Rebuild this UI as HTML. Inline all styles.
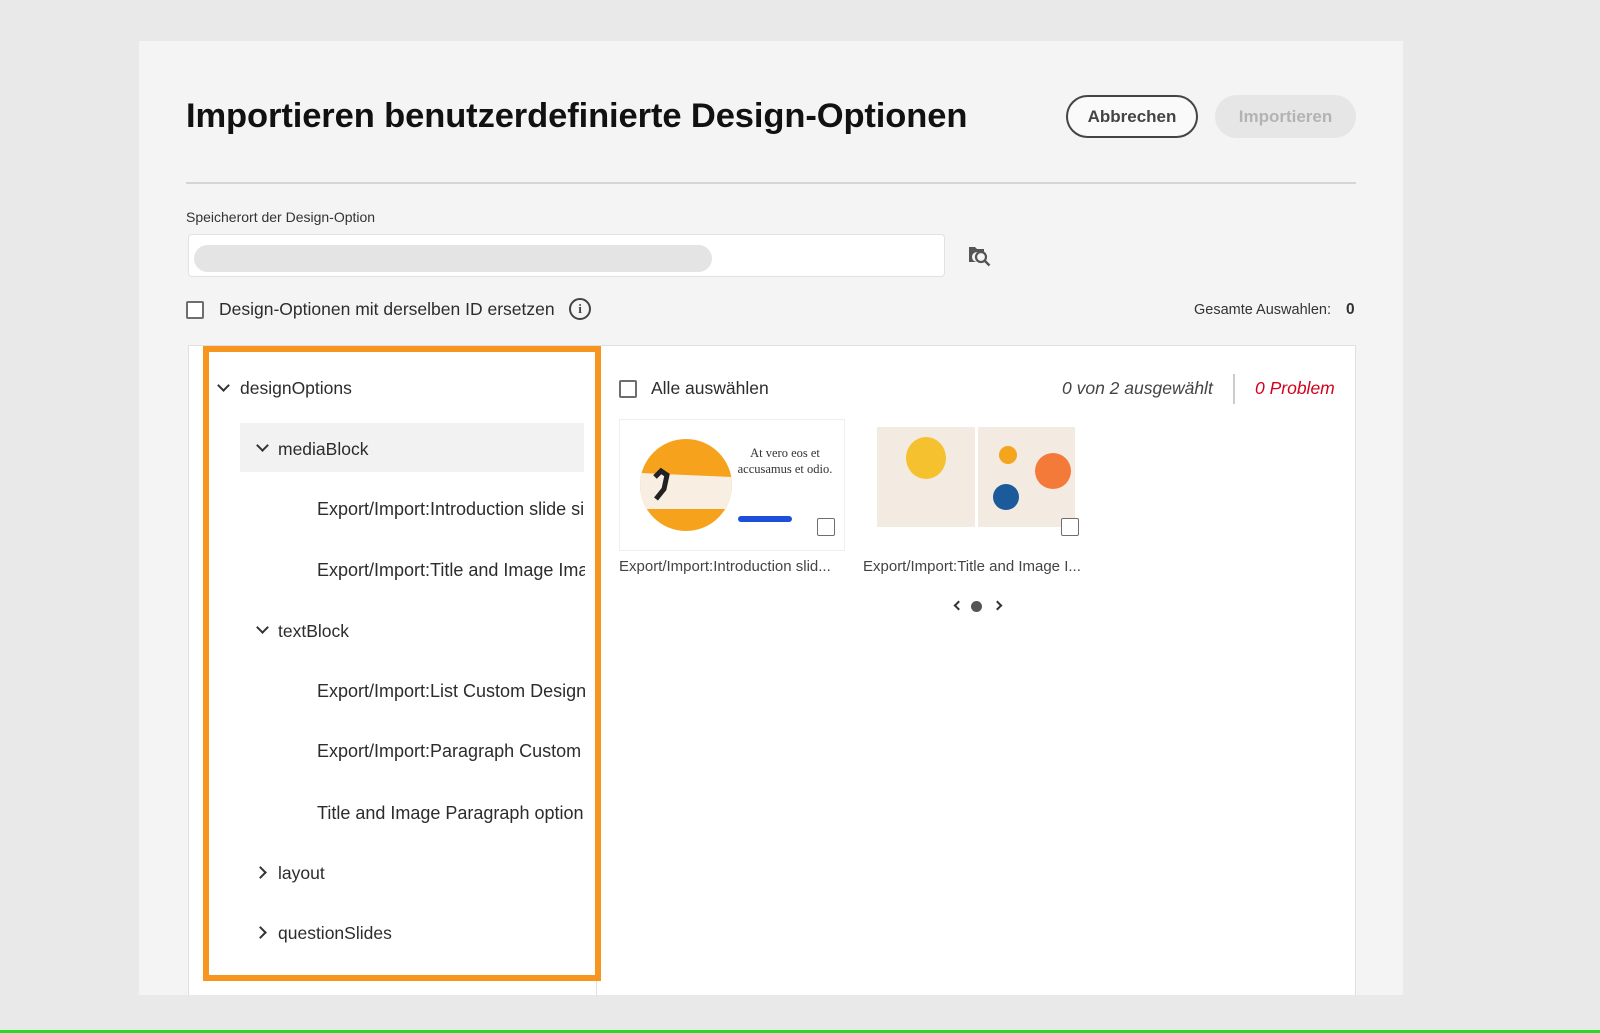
<!DOCTYPE html>
<html><head><meta charset="utf-8"><style>
*{box-sizing:border-box;margin:0;padding:0}
body{width:1600px;height:1033px;background:#e9e9e9;font-family:"Liberation Sans",sans-serif;position:relative;overflow:hidden;color:#222}
.a{position:absolute}
.dlg{left:139px;top:41px;width:1264px;height:954px;background:#f4f4f4}
.cb{width:18px;height:18px;border:2px solid #6e6e6e;border-radius:2px;background:#fff}
.t{font-size:17.5px;color:#2c2c2c;white-space:nowrap}
.chev{width:9px;height:9px;border-right:2px solid #333;border-bottom:2px solid #333}
</style></head><body>
<div class="a dlg"></div>
<div class="a" style="left:186px;top:97px;font-size:34.5px;font-weight:bold;color:#111;white-space:nowrap;letter-spacing:-0.1px">Importieren benutzerdefinierte Design-Optionen</div>
<div class="a" style="left:1066px;top:95px;width:132px;height:43px;border:2px solid #444;border-radius:22px;background:#fafafa;font-size:17px;font-weight:bold;color:#444;text-align:center;line-height:39px">Abbrechen</div>
<div class="a" style="left:1215px;top:95px;width:141px;height:43px;border-radius:22px;background:#e6e6e6;font-size:17px;font-weight:bold;color:#b3b3b3;text-align:center;line-height:43px">Importieren</div>
<div class="a" style="left:186px;top:182px;width:1170px;height:2px;background:#d5d5d5"></div>
<div class="a" style="left:186px;top:209px;font-size:14px;color:#333">Speicherort der Design-Option</div>
<div class="a" style="left:188px;top:234px;width:757px;height:43px;background:#fff;border:1px solid #e2e2e2;border-radius:4px"></div>
<div class="a" style="left:194px;top:245px;width:518px;height:27px;background:#e4e4e4;border-radius:14px"></div>
<svg class="a" style="left:968px;top:244px" width="26" height="24" viewBox="0 0 26 24"><path d="M1 3h6l2 2h7v3H9a5 5 0 0 0 0 10H1z" fill="#555"/><circle cx="13" cy="13" r="5" fill="none" stroke="#555" stroke-width="2.2"/><path d="M16.5 16.5l5 5" stroke="#555" stroke-width="2.4"/></svg>
<div class="a cb" style="left:186px;top:301px"></div>
<div class="a t" style="left:219px;top:299px">Design-Optionen mit derselben ID ersetzen</div>
<div class="a" style="left:569px;top:298px;width:22px;height:22px;border:2px solid #444;border-radius:50%;font-size:13px;font-weight:bold;text-align:center;line-height:18px;color:#444;font-family:'Liberation Serif',serif">i</div>
<div class="a" style="left:1194px;top:302px;font-size:14.5px;color:#333">Gesamte Auswahlen:</div>
<div class="a" style="left:1346px;top:301px;font-size:15.5px;font-weight:bold;color:#333">0</div>
<div class="a" style="left:188px;top:345px;width:1168px;height:650px;background:#fff;border:1px solid #e0e0e0;border-bottom:none"></div>
<div class="a" style="left:596px;top:345px;width:1px;height:650px;background:#e0e0e0"></div>
<div class="a" style="left:240px;top:423px;width:344px;height:49px;background:#f2f2f2"></div>
<div class="a chev" style="left:219px;top:381px;transform:rotate(45deg)"></div>
<div class="a t" style="left:240px;top:378px">designOptions</div>
<div class="a chev" style="left:258px;top:441px;transform:rotate(45deg)"></div>
<div class="a t" style="left:278px;top:439px">mediaBlock</div>
<div style="position:absolute;left:317px;top:0;width:268px;overflow:hidden;height:1033px">
<div class="a t" style="left:0;top:499px;font-size:18px">Export/Import:Introduction slide si</div>
<div class="a t" style="left:0;top:560px;font-size:18px">Export/Import:Title and Image Ima</div>
<div class="a t" style="left:0;top:681px;font-size:18px">Export/Import:List Custom Design</div>
<div class="a t" style="left:0;top:741px;font-size:18px">Export/Import:Paragraph Custom I</div>
<div class="a t" style="left:0;top:803px;font-size:18px">Title and Image Paragraph option 1</div>
</div>
<div class="a chev" style="left:258px;top:623px;transform:rotate(45deg)"></div>
<div class="a t" style="left:278px;top:621px">textBlock</div>
<div class="a chev" style="left:256px;top:868px;transform:rotate(-45deg)"></div>
<div class="a t" style="left:278px;top:863px">layout</div>
<div class="a chev" style="left:256px;top:928px;transform:rotate(-45deg)"></div>
<div class="a t" style="left:278px;top:923px">questionSlides</div>
<div class="a" style="left:203px;top:346px;width:398px;height:635px;border:6px solid #f7961f"></div>
<div class="a cb" style="left:619px;top:380px"></div>
<div class="a t" style="left:651px;top:378px">Alle auswählen</div>
<div class="a t" style="left:1062px;top:378px;font-style:italic;color:#444">0 von 2 ausgewählt</div>
<div class="a" style="left:1233px;top:374px;width:2px;height:30px;background:#ccc"></div>
<div class="a t" style="left:1255px;top:378px;font-style:italic;color:#d0021b">0 Problem</div>
<div class="a" style="left:619px;top:419px;width:226px;height:132px;background:#fff;border:1px solid #eee"></div>
<svg class="a" style="left:640px;top:437px" width="92" height="96"><defs><clipPath id="c"><circle cx="46" cy="48" r="46"/></clipPath></defs><g clip-path="url(#c)"><rect width="92" height="96" fill="#f7a21c"/><polygon points="0,36 92,40 92,72 0,72" fill="#f8efe2"/></g><path d="M15 40l6-6 6 4-3 14-8 10" stroke="#222" stroke-width="5" fill="none"/></svg>
<div class="a" style="left:735px;top:445px;width:100px;text-align:center;font-family:'Liberation Serif',serif;font-size:12.5px;line-height:16px;color:#333">At vero eos et accusamus et odio.</div>
<div class="a" style="left:738px;top:516px;width:54px;height:6px;background:#1e4fd8;border-radius:3px"></div>
<div class="a cb" style="left:817px;top:518px;border-width:1.5px"></div>
<div class="a" style="left:877px;top:427px;width:98px;height:100px;background:#f3ebe1"></div>
<div class="a" style="left:978px;top:427px;width:97px;height:100px;background:#f3ebe1"></div>
<div class="a" style="left:906px;top:437px;width:40px;height:42px;border-radius:50%;background:#f6c12e"></div>
<div class="a" style="left:1035px;top:453px;width:36px;height:36px;border-radius:50%;background:#f47a3a"></div>
<div class="a" style="left:993px;top:484px;width:26px;height:26px;border-radius:50%;background:#1b5a9b"></div>
<div class="a" style="left:999px;top:446px;width:18px;height:18px;border-radius:50%;background:#f4a41d"></div>
<div class="a cb" style="left:1061px;top:518px;border-width:1.5px"></div>
<div class="a" style="left:619px;top:558px;font-size:15px;color:#444;white-space:nowrap">Export/Import:Introduction slid...</div>
<div class="a" style="left:863px;top:558px;font-size:15px;color:#444;white-space:nowrap">Export/Import:Title and Image I...</div>
<div class="a chev" style="left:955px;top:602px;width:7px;height:7px;transform:rotate(135deg)"></div>
<div class="a" style="left:971px;top:601px;width:11px;height:11px;border-radius:50%;background:#555"></div>
<div class="a chev" style="left:994px;top:602px;width:7px;height:7px;transform:rotate(-45deg)"></div>
<div class="a" style="left:0;top:1030px;width:1600px;height:3px;background:#22dd22"></div>
</body></html>
